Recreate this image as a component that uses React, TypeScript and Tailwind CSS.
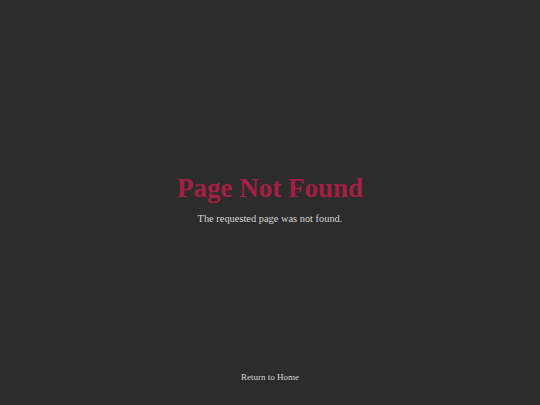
export default function App() {
  return (
    <div className="flex min-h-screen flex-col bg-[#2c2c2c] font-['Liberation_Serif',serif] text-[#d4d4d4]">
      <main className="flex flex-1 flex-col items-center justify-center pt-[28px]">
        <h1 className="text-[27px] font-bold leading-tight text-[#a41f43]">Page Not Found</h1>
        <p className="mt-[5px] text-[10.4px]">The requested page was not found.</p>
      </main>
      <footer className="flex justify-center pb-[21px]">
        <a href="#" className="text-[9px] text-[#d4d4d4]">Return to Home</a>
      </footer>
    </div>
  );
}
